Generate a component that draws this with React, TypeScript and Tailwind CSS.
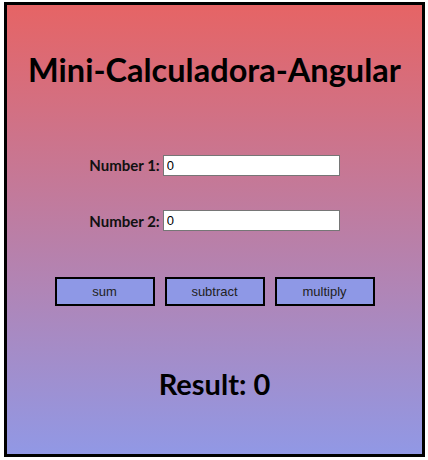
import { useState } from 'react';

export default function App() {
  const [a, setA] = useState('0');
  const [b, setB] = useState('0');
  const [result, setResult] = useState(0);

  const heading = { fontFamily: 'Lato, "Noto Sans", sans-serif' };

  return (
    <div className="pl-1 pt-0.5">
      <div className="w-[421px] h-[455px] border-[3px] border-black bg-[linear-gradient(#e66465,#9198e5)] flex flex-col items-center">
        <h1 className="mt-[45px] text-[32.5px] font-bold leading-[40px] text-black" style={heading}>
          Mini-Calculadora-Angular
        </h1>

        <div className="mt-[64px] flex items-center gap-[3px]">
          <label className="text-[15px] font-bold text-[#111]" style={heading}>Number 1:</label>
          <input
            className="w-[177px] h-[21px] border border-[#767676] bg-white px-[3px] text-[13px] text-black"
            style={{ fontFamily: '"Liberation Sans", Arial, sans-serif' }}
            value={a}
            onChange={(e) => setA(e.target.value)}
          />
        </div>

        <div className="mt-[33px] flex items-center gap-[3px]">
          <label className="text-[15px] font-bold text-[#111]" style={heading}>Number 2:</label>
          <input
            className="w-[177px] h-[21px] border border-[#767676] bg-white px-[3px] text-[13px] text-black"
            style={{ fontFamily: '"Liberation Sans", Arial, sans-serif' }}
            value={b}
            onChange={(e) => setB(e.target.value)}
          />
        </div>

        <div className="mt-[45px] flex gap-[10px]" style={{ fontFamily: '"Liberation Sans", Arial, sans-serif' }}>
          <button
            className="w-[100px] h-[29px] border-2 border-black bg-[#8e98e6] text-[13px] text-[#222]"
            onClick={() => setResult(Number(a) + Number(b))}
          >
            sum
          </button>
          <button
            className="w-[100px] h-[29px] border-2 border-black bg-[#8e98e6] text-[13px] text-[#222]"
            onClick={() => setResult(Number(a) - Number(b))}
          >
            subtract
          </button>
          <button
            className="w-[100px] h-[29px] border-2 border-black bg-[#8e98e6] text-[13px] text-[#222]"
            onClick={() => setResult(Number(a) * Number(b))}
          >
            multiply
          </button>
        </div>

        <h2 className="mt-[61px] text-[29px] font-bold leading-[34px] text-black" style={heading}>
          Result: {result}
        </h2>
      </div>
    </div>
  );
}
